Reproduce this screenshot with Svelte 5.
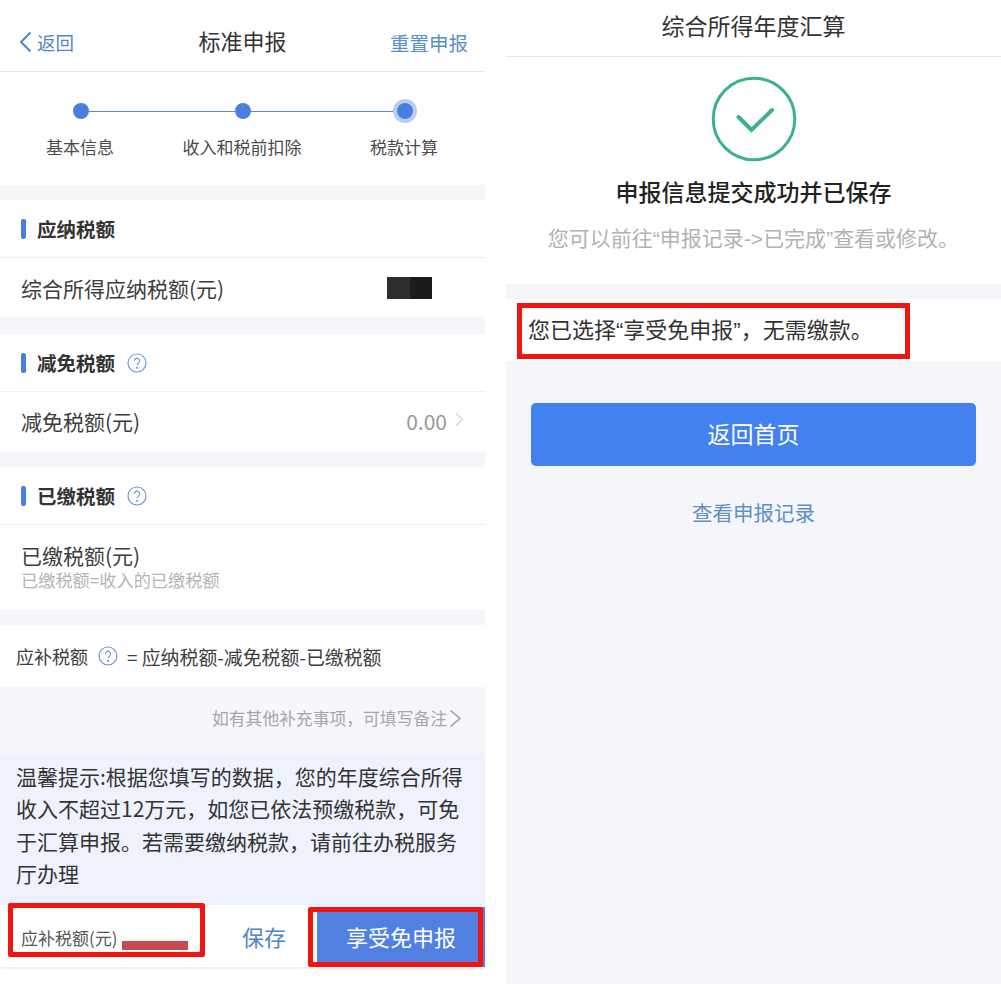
<script>
  const steps = ['基本信息', '收入和税前扣除', '税款计算'];
</script>

{#snippet help(cls)}
  <svg class={cls} viewBox="0 0 20 20" fill="none" stroke="#6f9bd0" stroke-width="1.2">
    <circle cx="10" cy="10" r="9" />
    <path d="M7.4 7.800a2.600 2.600 0 1 1 4.200 2.100c-.9.7-1.600 1.200-1.600 2.400" />
    <circle cx="10" cy="14.800" r=".5" />
  </svg>
{/snippet}

<div class="page">
  <section class="panel left">
    <header class="nav">
      <div class="back">
        <svg width="13" height="22" viewBox="0 0 13 22" fill="none" stroke="#4f86c6" stroke-width="2"><path d="M11.500 1.500 2 11l9.500 9.500" /></svg>
        <span>返回</span>
      </div>
      <div class="nav-title">标准申报</div>
      <div class="reset">重置申报</div>
    </header>

    <div class="steps">
      <div class="track">
        <i class="dot"></i><i class="line"></i><i class="dot"></i><i class="line"></i><i class="dot on"></i>
      </div>
      <div class="labels">
        {#each steps as s}<span>{s}</span>{/each}
      </div>
    </div>

    <div class="gap"></div>
    <div class="head"><i class="bar"></i><b>应纳税额</b></div>
    <div class="row"><span>综合所得应纳税额(元)</span><i class="mask"></i></div>

    <div class="gap g17"></div>
    <div class="head"><i class="bar"></i><b>减免税额</b>{@render help('q')}</div>
    <div class="row r60">
      <span>减免税额(元)</span>
      <div class="val">
        0.00
        <svg width="9" height="15" viewBox="0 0 9 15" fill="none" stroke="#d5d5d8" stroke-width="1.300"><path d="m1 1.500 6.500 6L1 13.500" /></svg>
      </div>
    </div>

    <div class="gap"></div>
    <div class="head"><i class="bar"></i><b>已缴税额</b>{@render help('q')}</div>
    <div class="row tall">
      <div class="paid">
        <span>已缴税额(元)</span>
        <small>已缴税额=收入的已缴税额</small>
      </div>
    </div>

    <div class="gap"></div>
    <div class="formula">应补税额{@render help('q2')}<span>= 应纳税额-减免税额-已缴税额</span></div>
    <div class="note">
      如有其他补充事项，可填写备注
      <svg width="13" height="19" viewBox="0 0 13 19" fill="none" stroke="#9a9a9e" stroke-width="1.400"><path d="m1.500 1.500 9.500 8-9.500 8" /></svg>
    </div>
    <div class="tip">
      温馨提示:根据您填写的数据，您的年度综合所得<br />
      收入不超过12万元，如您已依法预缴税款，可免<br />
      于汇算申报。若需要缴纳税款，请前往办税服务<br />
      厅办理
    </div>
    <div class="foot">
      <div class="due"><span>应补税额(元)</span><i class="smear"></i></div>
      <div class="save">保存</div>
      <div class="submit">享受免申报</div>
      <i class="mark m1"></i>
      <i class="mark m2"></i>
    </div>
  </section>

  <section class="panel right">
    <header class="r-nav">综合所得年度汇算</header>
    <div class="done">
      <svg width="86" height="86" viewBox="0 0 86 86" fill="none" stroke="#3fb285">
        <circle cx="43" cy="43" r="40.800" stroke-width="3" />
        <path d="m27.500 41 13 13L61 34" stroke-width="4" stroke-linecap="round" />
      </svg>
      <h2>申报信息提交成功并已保存</h2>
      <p>您可以前往<span class="latin">“</span>申报记录<span class="latin">-&gt;</span>已完成<span class="latin">”</span>查看或修改。</p>
    </div>
    <div class="gap"></div>
    <div class="result">
      <span>您已选择<span class="latin">“</span>享受免申报<span class="latin">”</span>，无需缴款。</span>
      <i class="mark m3"></i>
    </div>
    <div class="rest">
      <div class="home">返回首页</div>
      <div class="records">查看申报记录</div>
    </div>
  </section>
</div>

<style>
  :global(body) { background: #fff; }

  .page {
    width: 1001px; height: 984px;
    display: flex; gap: 21px;
    font-family: 'Noto Sans CJK SC', 'Noto Sans', sans-serif;
    color: #333;
    overflow: hidden;
  }
  .panel { display: flex; flex-direction: column; position: relative; }
  .left { width: 485px; }
  .right { width: 495px; }
  i { display: block; }
  .latin { font-family: 'Liberation Sans', sans-serif; }

  .gap { height: 15px; background: #f5f6fa; }
  .g17 { height: 17px; }

  .nav {
    height: 72px; padding: 13px 17px 0 19px; box-sizing: border-box;
    border-bottom: 1px solid #e9e9eb;
    display: grid; grid-template-columns: 1fr auto 1fr; align-items: center;
  }
  .back { display: flex; align-items: center; gap: 5px; color: #4f86c6; font-size: 18.500px; }
  .nav-title { font-size: 22px; color: #333; margin: -4px 0 0 -2px; }
  .reset { font-size: 19.500px; color: #5a8fc9; text-align: right; }

  .steps { height: 113px; padding-top: 27px; box-sizing: border-box; }
  .track { display: flex; align-items: center; padding: 0 72px 0 73px; height: 24px; }
  .dot { width: 16px; height: 16px; border-radius: 50%; background: #4c7ee0; flex: none; }
  .dot.on { box-shadow: 0 0 0 4px #b9cdf0; }
  .line { flex: 1; height: 1px; background: #5b8cc8; }
  .labels { display: grid; grid-template-columns: repeat(3, 162px); margin: 11px 0 0 -1px; text-align: center; font-size: 17px; color: #4a4a4a; }

  .head { height: 58px; display: flex; align-items: center; padding-left: 21px; border-bottom: 1px solid #efeff1; box-sizing: border-box; }
  .head b { font-size: 19.500px; font-weight: 700; color: #333; margin-left: 11px; }
  .bar { width: 5px; height: 20px; border-radius: 2px; background: #4c7ee0; }
  .q { width: 20px; height: 20px; margin-left: 12px; }

  .row { height: 59px; padding: 0 21px 0 21px; display: flex; align-items: center; justify-content: space-between; font-size: 21px; color: #3d3d3d; }
  .r60 { height: 60px; padding-bottom: 2px; box-sizing: border-box; }
  .tall { height: 85px; }
  .mask { width: 45px; height: 22px; margin: 0 32px 0 0; background: linear-gradient(90deg, #2d2d2d 50%, #1b1b1b 50%); }
  .val { display: flex; align-items: center; gap: 8px; color: #999; font-size: 21px; }
  .val svg { margin-top: -3px; }
  .paid { display: flex; flex-direction: column; margin-top: -3px; }
  .paid span { line-height: 27px; }
  .paid small { font-size: 17.200px; line-height: 22px; color: #b4b4b8; }

  .formula { height: 62px; padding-left: 16px; display: flex; align-items: center; font-size: 18px; color: #3d3d3d; }
  .formula span { font-size: 18.900px; }
  .q2 { width: 20px; height: 20px; margin: 0 9px 0 10px; }

  .note { height: 66px; padding: 0 23px 4px 0; box-sizing: border-box; background: #f6f7fc; display: flex; align-items: center; justify-content: flex-end; gap: 2px; font-size: 16.800px; color: #a6a6aa; }
  .tip { height: 152px; padding: 7px 0 0 16px; box-sizing: border-box; background: #eef2fc; font-size: 21px; line-height: 32.400px; color: #333; white-space: nowrap; }

  .foot { height: 62px; display: flex; background: #fff; position: relative; box-shadow: 0 1px 3px rgba(0, 0, 0, .1); }
  .due { width: 211px; padding: 20px 0 0 21px; box-sizing: border-box; display: flex; align-items: flex-start; font-size: 17px; color: #555; position: relative; }
  .smear { position: absolute; left: 122px; top: 36px; width: 66px; height: 9px; background: #c8494f; }
  .save { width: 106px; text-align: center; font-size: 22px; line-height: 62px; color: #4f86c6; }
  .submit { flex: 1; margin-top: 2px; height: 60px; text-align: center; background: #5180e2; color: #fff; font-size: 22px; line-height: 58px; }

  .mark { position: absolute; border: 5px solid #f2150f; border-radius: 2px; box-sizing: border-box; }
  .m1 { left: 8px; top: -2px; width: 197px; height: 54px; }
  .m2 { left: 308px; top: 2px; width: 175px; height: 60px; }
  .m3 { left: 11px; top: 4px; width: 393px; height: 56px; border-radius: 0; }

  .r-nav { height: 57px; padding-bottom: 6px; box-sizing: border-box; border-bottom: 1px solid #e6e6e8; display: flex; align-items: center; justify-content: center; font-size: 23px; color: #333; }
  .done { height: 227px; display: flex; flex-direction: column; align-items: center; padding-top: 19px; box-sizing: border-box; }
  .done h2 { margin: 12px 0 0; font-size: 23px; line-height: 34px; font-weight: 500; color: #222; }
  .done p { margin: 14px 0 0; font-size: 21px; line-height: 30px; color: #b2b2b5; }

  .result { height: 62px; padding: 0 0 4px 22px; box-sizing: border-box; display: flex; align-items: center; font-size: 22px; color: #333; position: relative; }
  .rest { flex: 1; background: #f5f6fa; padding: 42px 25px 0; }
  .home { height: 63px; border-radius: 5px; background: #4281ee; color: #fff; font-size: 23px; line-height: 61px; text-align: center; }
  .records { margin-top: 29px; text-align: center; font-size: 20.500px; line-height: 34px; color: #5f8fc4; }
</style>
